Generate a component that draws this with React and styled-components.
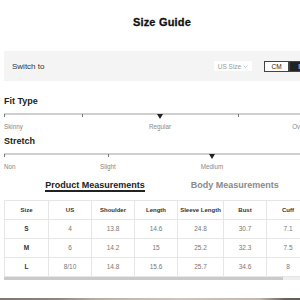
import React from "react";
import styled, { createGlobalStyle } from "styled-components";

const GlobalStyle = createGlobalStyle`
  body {
    margin: 0;
    background: #fff;
    overflow: hidden;
    font-family: "Liberation Sans", Arial, sans-serif;
  }
`;

const Page = styled.div`
  width: 316px;
  padding: 0 4px;
`;

const Title = styled.h1`
  margin: 0;
  padding-top: 15px;
  font-size: 11px;
  line-height: 14px;
  font-weight: 700;
  text-align: center;
  color: #111;
  letter-spacing: 0.2px;
  -webkit-text-stroke: 0.3px #111;
`;

const SwitchBar = styled.div`
  margin-top: 22px;
  height: 30px;
  background: #f4f4f4;
  display: flex;
  align-items: center;
  padding: 0 6px 0 8px;
  font-size: 8px;
  color: #333;
`;

const SwitchLabel = styled.span`
  flex: 1;
`;

const Dropdown = styled.div`
  width: 38px;
  height: 10px;
  background: #fff;
  display: flex;
  align-items: center;
  justify-content: center;
  gap: 2px;
  font-size: 6.5px;
  color: #999;
  margin-right: 12px;
`;

const Toggle = styled.div`
  display: flex;
  height: 11px;
`;

const ToggleButton = styled.div`
  width: 25px;
  box-sizing: border-box;
  display: flex;
  align-items: center;
  justify-content: center;
  font-size: 6.5px;
  background: ${(p) => (p.$active ? "#222" : "#fff")};
  color: ${(p) => (p.$active ? "#fff" : "#222")};
  border: 1px solid #444;
`;

const Heading = styled.h2`
  margin: ${(p) => p.$top}px 0 0;
  font-size: 9px;
  line-height: 11px;
  font-weight: 700;
  color: #222;
`;

const Scale = styled.div`
  position: relative;
  width: 312px;
  height: 18px;
  margin-top: 6px;
`;

const Line = styled.div`
  height: 2px;
  background: #cfcfcf;
`;

const Tick = styled.div`
  position: absolute;
  top: 1px;
  width: 1px;
  height: 3px;
  background: #777;
`;

const Marker = styled.div`
  position: absolute;
  top: 1px;
  width: 0;
  height: 0;
  margin-left: -3px;
  border-left: 3px solid transparent;
  border-right: 3px solid transparent;
  border-top: 5px solid #222;
`;

const ScaleLabel = styled.span`
  position: absolute;
  top: 10px;
  font-size: 6.3px;
  line-height: 8px;
  color: #888;
  white-space: nowrap;
  transform: translateX(${(p) => p.$shift}%);
`;

const Tabs = styled.div`
  margin-top: 9px;
  display: flex;
  justify-content: center;
  gap: 46px;
`;

const Tab = styled.div`
  font-size: 9px;
  line-height: 10px;
  font-weight: 700;
  color: ${(p) => (p.$active ? "#222" : "#8a8a8a")};
  border-bottom: 2px solid ${(p) => (p.$active ? "#222" : "transparent")};
`;

const Table = styled.table`
  margin-top: 8px;
  border-collapse: collapse;
  table-layout: fixed;
  width: 305px;
`;

const Cell = styled.td`
  height: 18px;
  padding: 0;
  border: 1px solid #e6e6e6;
  text-align: center;
  font-size: ${(p) => (p.$head ? "6px" : "6.5px")};
  font-weight: ${(p) => (p.$bold ? 700 : 400)};
  color: ${(p) => (p.$bold ? "#333" : "#777")};
`;

const ScrollTrack = styled.div`
  height: 3px;
  background: #eeeeee;
`;

const ScrollThumb = styled.div`
  width: 279px;
  height: 3px;
  background: #cacaca;
`;

const PhotoStrip = styled.div`
  margin: 18px -4px 0;
  height: 4px;
  background: linear-gradient(
    90deg,
    #7e7770 0%,
    #8f877e 18%,
    #b9b0a4 30%,
    #cfc7bd 55%,
    #c2b8ac 80%,
    #6a635d 88%,
    #5a5550 100%
  );
`;

const scales = [
  {
    title: "Fit Type",
    top: 15,
    ticks: [0, 25, 50, 75, 100],
    marker: 50,
    labels: [
      { text: "Skinny", at: 0, shift: 0 },
      { text: "Regular", at: 50, shift: -50 },
      { text: "Oversized", at: 100, shift: -84 },
    ],
  },
  {
    title: "Stretch",
    top: 4.5,
    ticks: [0, 33.33, 66.67, 100],
    marker: 66.67,
    labels: [
      { text: "Non", at: 0, shift: 0 },
      { text: "Slight", at: 33.33, shift: -50 },
      { text: "Medium", at: 66.67, shift: -50 },
    ],
  },
];

const columns = [
  ["Size", 44],
  ["US", 43],
  ["Shoulder", 43],
  ["Length", 43],
  ["Sleeve Length", 46],
  ["Bust", 43],
  ["Cuff", 43],
];

const rows = [
  ["S", "4", "13.8", "14.6", "24.8", "30.7", "7.1"],
  ["M", "6", "14.2", "15", "25.2", "32.3", "7.5"],
  ["L", "8/10", "14.8", "15.6", "25.7", "34.6", "8"],
];

export default function App() {
  return (
    <Page>
      <GlobalStyle />
      <Title>Size Guide</Title>

      <SwitchBar>
        <SwitchLabel>Switch to</SwitchLabel>
        <Dropdown>
          US Size
          <svg width="5" height="3" viewBox="0 0 5 3">
            <path d="M0.5 0.5 L2.5 2.5 L4.5 0.5" fill="none" stroke="#aaa" strokeWidth="0.6" />
          </svg>
        </Dropdown>
        <Toggle>
          <ToggleButton>CM</ToggleButton>
          <ToggleButton $active>IN</ToggleButton>
        </Toggle>
      </SwitchBar>

      {scales.map((s) => (
        <React.Fragment key={s.title}>
          <Heading $top={s.top}>{s.title}</Heading>
          <Scale>
            <Line />
            {s.ticks.map((t) => (
              <Tick key={t} style={{ left: `${t}%` }} />
            ))}
            <Marker style={{ left: `${s.marker}%` }} />
            {s.labels.map((l) => (
              <ScaleLabel key={l.text} $shift={l.shift} style={{ left: `${l.at}%` }}>
                {l.text}
              </ScaleLabel>
            ))}
          </Scale>
        </React.Fragment>
      ))}

      <Tabs>
        <Tab $active>Product Measurements</Tab>
        <Tab>Body Measurements</Tab>
      </Tabs>

      <Table>
        <colgroup>
          {columns.map(([name, w]) => (
            <col key={name} style={{ width: w }} />
          ))}
        </colgroup>
        <thead>
          <tr>
            {columns.map(([name]) => (
              <Cell as="th" key={name} $head $bold>
                {name}
              </Cell>
            ))}
          </tr>
        </thead>
        <tbody>
          {rows.map((r) => (
            <tr key={r[0]}>
              {r.map((v, i) => (
                <Cell key={i} $bold={i === 0}>
                  {v}
                </Cell>
              ))}
            </tr>
          ))}
        </tbody>
      </Table>
      <ScrollTrack>
        <ScrollThumb />
      </ScrollTrack>
      <PhotoStrip />
    </Page>
  );
}
